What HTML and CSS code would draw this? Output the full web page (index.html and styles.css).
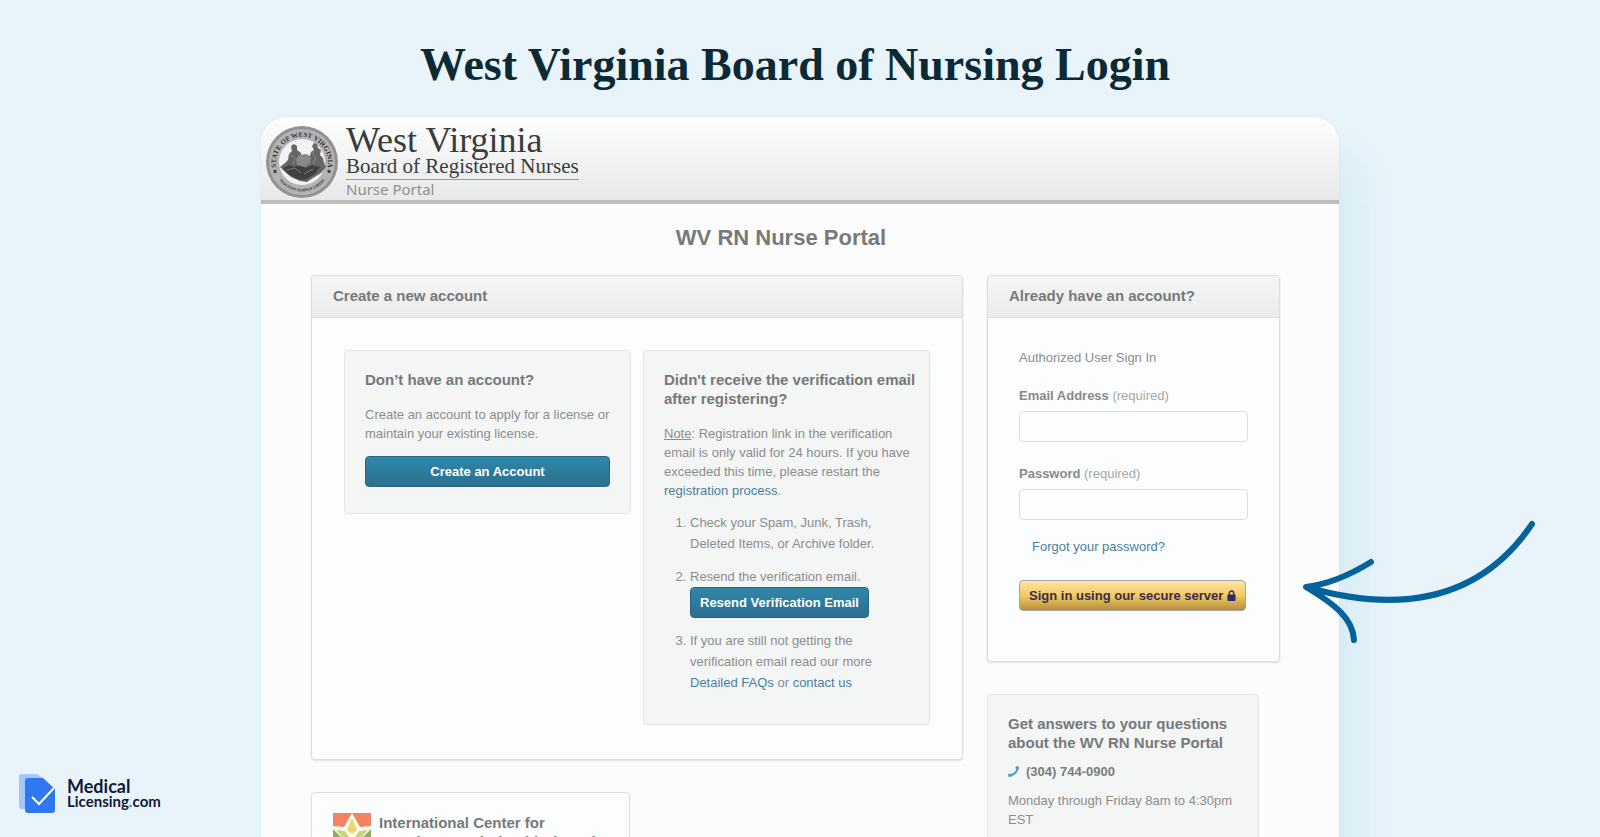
FILE: index.html
```html
<!DOCTYPE html>
<html lang="en">
<head>
    <meta charset="UTF-8">
    <meta name="viewport" content="width=device-width, initial-scale=1.0">
    <title>West Virginia Board of Nursing Login</title>
    <link rel="stylesheet" href="styles.css">
</head>
<body>
    <div class="page">
        <h1 class="page-title">West Virginia Board of Nursing Login</h1>

        <div class="window">
            <header class="site-header">
                <svg class="seal" viewBox="0 0 72 72" role="img" aria-label="State seal">
                    <defs>
                        <path id="sealTop" d="M10.5 42 A26 26 0 1 1 61.5 42"/>
                        <path id="sealBottom" d="M9 47 A29 29 0 0 0 63 47"/>
                    </defs>
                    <circle cx="36" cy="36" r="36" fill="#929292"/>
                    <circle cx="36" cy="36" r="33" fill="#b4b4b4"/>
                    <circle cx="36" cy="36" r="23" fill="#f2f2f2"/>
                    <path d="M14 41l5-4 3-3 1-6 3-3-1-5 3-2 3 2 0 4 4 3 0 3 5-1 4 1 1-4 3-2-2-4 2-3 3 1 1 4 3 2-1 5 3 3 1 5 2 4-5 6-8 5-6 4-7-1-9-4-7-6z" fill="#666"/>
                    <path d="M17 42l6-3 5 2 5-2 7 3 6-3 8 2-5 7-10 6-8-1-9-5z" fill="#404040"/>
                    <path d="M30 33l3-4 7-1 5 3-1 7-6 3-7-2z" fill="#888"/>
                    <path d="M24 28l5 4-2 6M46 26l4 6-3 6M21 44l8-2 6 5M38 48l9-5M33 32l8 1" stroke="#999" stroke-width=".7" fill="none"/>
                    <text class="seal-top"><textPath href="#sealTop" startOffset="50%">STATE OF WEST VIRGINIA</textPath></text>
                    <text class="seal-bottom"><textPath href="#sealBottom" startOffset="50%">MONTANI SEMPER LIBERI</textPath></text>
                    <path d="M9 43l.7 1.500 1.600.2-1.200 1.100.3 1.600-1.400-.8-1.400.8.3-1.600-1.200-1.100 1.600-.2zM63 43l.7 1.500 1.600.2-1.200 1.100.3 1.600-1.400-.8-1.400.8.3-1.600-1.200-1.100 1.600-.2z" fill="#333"/>
                </svg>
                <div class="site-name">
                    <div class="state">West Virginia</div>
                    <div class="board">Board of Registered Nurses</div>
                    <div class="portal">Nurse Portal</div>
                </div>
            </header>

            <main class="content">
                <h2 class="portal-title">WV RN Nurse Portal</h2>

                <div class="columns">
                    <div class="column">
                        <section class="panel create-panel">
                            <h3 class="panel-header">Create a new account</h3>
                            <div class="panel-cards">
                                <div class="card">
                                    <h4>Don’t have an account?</h4>
                                    <p>Create an account to apply for a license or maintain your existing license.</p>
                                    <button type="button" class="btn btn-block">Create an Account</button>
                                </div>
                                <div class="card verify-card">
                                    <h4>Didn't receive the verification email after registering?</h4>
                                    <p><u>Note</u>: Registration link in the verification email is only valid for 24 hours. If you have exceeded this time, please restart the <a href="#">registration process</a>.</p>
                                    <ol>
                                        <li>Check your Spam, Junk, Trash, Deleted Items, or Archive folder.</li>
                                        <li>Resend the verification email.
                                            <button type="button" class="btn">Resend Verification Email</button>
                                        </li>
                                        <li>If you are still not getting the verification email read our more <a href="#">Detailed FAQs</a> or <a href="#">contact us</a></li>
                                    </ol>
                                </div>
                            </div>
                        </section>

                        <section class="scholar-card">
                            <svg class="scholar-logo" viewBox="0 0 38 38" aria-hidden="true">
                                <rect width="38" height="38" fill="#f4845f"/>
                                <path d="M0 16l12 3-4 19H0zM38 16l-12 3 4 19h8z" fill="#8fae5d"/>
                                <path d="M19 0l8 14 11-1v3l-9 9 3 13H6l3-13-9-9v-3l11 1z" fill="#fffdf2"/>
                                <path d="M19 5l5 12-5 4-5-4z" fill="#f0d46c"/>
                                <path d="M3 17l9 1 4 6-5 2zM35 17l-9 1-4 6 5 2z" fill="#c9d578"/>
                            </svg>
                            <h4>International Center for Regulatory Scholarship (ICRS)</h4>
                        </section>
                    </div>

                    <div class="column">
                        <section class="panel">
                            <h3 class="panel-header">Already have an account?</h3>
                            <form class="login-form">
                                <p>Authorized User Sign In</p>
                                <label for="email">Email Address <span>(required)</span></label>
                                <input type="email" id="email">
                                <label for="password">Password <span>(required)</span></label>
                                <input type="password" id="password">
                                <a class="forgot" href="#">Forgot your password?</a>
                                <button type="button" class="btn-login">Sign in using our secure server
                                    <svg viewBox="0 0 10 12" aria-hidden="true">
                                        <path d="M2.500 6V3.500a2.500 2.500 0 0 1 5 0V6" fill="none" stroke="#2b2a6b" stroke-width="1.500"/>
                                        <rect x="0.500" y="5" width="9" height="7" rx="1" fill="#2b2a6b"/>
                                    </svg>
                                </button>
                            </form>
                        </section>

                        <section class="card help-card">
                            <h4>Get answers to your questions about the WV RN Nurse Portal</h4>
                            <div class="phone">
                                <svg viewBox="0 0 11 11" aria-hidden="true">
                                    <path d="M9.500 1C10 5 6 9.500 1 9.500" fill="none" stroke="#5f9bb8" stroke-width="2"/>
                                    <path d="M7.500 .5l3-.5.5 3.500-3 .5zM0 8l3.500-.5.8 2.800L.5 11z" fill="#5f9bb8"/>
                                </svg>
                                (304) 744-0900
                            </div>
                            <p>Monday through Friday 8am to 4:30pm EST</p>
                        </section>
                    </div>
                </div>
            </main>
        </div>

        <svg class="arrow" viewBox="0 0 240 135" aria-hidden="true">
            <path d="M232 9C180 86 100 99 6 72M71 47C50 60 30 69 6 72C36 90 53 104 54 125"/>
        </svg>

        <a class="brand" href="#">
            <svg viewBox="0 0 36 39" aria-hidden="true">
                <path d="M3 0h14q2 0 4 2l6 5v28H3q-3 0-3-3V3q0-3 3-3z" fill="#a4c8fa"/>
                <path d="M9 4h15l12 11v21q0 3-3 3H9q-3 0-3-3V7q0-3 3-3z" fill="#2f78f2"/>
                <path d="M13 23l7 7 15-16" fill="none" stroke="#fff" stroke-width="2"/>
            </svg>
            <span class="brand-name">
                <span class="brand-medical">Medical</span>
                <span class="brand-licensing">Licensing<i>.</i>com</span>
            </span>
        </a>
    </div>
</body>
</html>
```
FILE: styles.css
```css
* {
    box-sizing: border-box;
}
body {
    font-family: "Liberation Sans", Arial, sans-serif;
    font-size: 13px;
    line-height: 19px;
    margin: 0;
    color: #8b8d8e;
    background-color: #e8f4fa;
}
h1, h2, h3, h4, p {
    margin: 0;
}
a {
    color: #4a7f9f;
    text-decoration: none;
}
.page {
    position: relative;
    height: 100vh;
    overflow: hidden;
    padding: 37px 261px 0;
}
.page-title {
    padding-right: 10px;
    margin-bottom: 24px;
    font-family: "Liberation Serif", serif;
    font-size: 46px;
    line-height: 56px;
    text-align: center;
    color: #0c2a35;
}
.window {
    border-radius: 26px 26px 0 0;
    background-color: #fcfcfc;
    box-shadow: 0 0 2px #cddfe2, 28px 30px 40px -6px rgba(150, 205, 225, 0.2);
}

/* portal header */
.site-header {
    display: flex;
    align-items: flex-start;
    gap: 8px;
    height: 87px;
    padding: 8px 5px 0;
    border-bottom: 4px solid #bdbdbd;
    border-radius: 26px 26px 0 0;
    background: linear-gradient(#fdfefe, #e7e8e8);
}
.seal {
    width: 72px;
    height: 74px;
}
.seal text {
    font-family: "Liberation Serif", serif;
    font-weight: bold;
    text-anchor: middle;
    fill: #333;
}
.seal .seal-top {
    font-size: 7px;
}
.seal .seal-bottom {
    font-size: 4px;
}
.site-name {
    font-family: "Liberation Serif", serif;
    color: #3a3b3c;
}
.state {
    font-size: 36px;
    line-height: 30px;
}
.board {
    padding-bottom: 2px;
    border-bottom: 1px solid #999;
    font-size: 21px;
    line-height: 22px;
}
.portal {
    font-family: "Noto Sans", sans-serif;
    font-size: 15px;
    line-height: 18px;
    color: #8e9090;
}

/* main area */
.content {
    padding: 20px 59px 0 50px;
}
.portal-title {
    padding-right: 29px;
    margin-bottom: 23px;
    font-size: 22px;
    line-height: 28px;
    text-align: center;
    color: #77797a;
}
.columns {
    display: grid;
    grid-template-columns: 1fr 293px;
    gap: 24px;
}
.column {
    display: flex;
    flex-direction: column;
    gap: 32px;
}
.panel {
    border: 1px solid #dcdee0;
    border-radius: 4px;
    background-color: #fcfdfe;
    box-shadow: 0 1px 2px rgba(0, 0, 0, 0.12);
}
.panel-header {
    padding: 10px 21px 12px;
    border-bottom: 1px solid #d9dbdc;
    border-radius: 4px 4px 0 0;
    background: linear-gradient(#f4f5f5, #eaebeb);
    font-size: 15px;
    line-height: 19px;
    color: #76797a;
}
.panel-cards {
    display: grid;
    grid-template-columns: minmax(0, 1fr) minmax(0, 1fr);
    align-items: start;
    gap: 12px;
    padding: 32px 32px 34px;
}
.card {
    padding: 19px 20px 20px;
    border: 1px solid #e1e3e4;
    border-radius: 4px;
    background-color: #f4f5f5;
}
.card h4, .scholar-card h4 {
    font-size: 15px;
    line-height: 19px;
    color: #76797a;
}
.panel-cards h4 {
    margin: 0 -12px 16px 0;
}
.panel-cards p {
    margin-right: -12px;
}
.panel-cards .card {
    padding-bottom: 26px;
}
.panel-cards .verify-card {
    padding-bottom: 19px;
}
.btn {
    display: block;
    height: 31px;
    padding: 0 9px;
    border: 1px solid #2b6480;
    border-radius: 4px;
    background: linear-gradient(#2f87a8, #2c7090);
    font-family: inherit;
    font-size: 13px;
    font-weight: bold;
    color: #fff;
}
.btn-block {
    width: 100%;
    margin-top: 13px;
}
ol {
    margin: 12px 0 0;
    padding-left: 26px;
    line-height: 21px;
}
li {
    padding-right: 30px;
    margin-bottom: 12px;
}
li .btn {
    white-space: nowrap;
}
.scholar-card {
    display: flex;
    gap: 8px;
    width: 319px;
    padding: 20px 21px;
    border: 1px solid #dcdee0;
    border-radius: 4px;
    background-color: #fcfdfe;
}
.scholar-logo {
    width: 38px;
    height: 38px;
    flex: none;
}

/* sign in */
.login-form {
    display: flex;
    flex-direction: column;
    padding: 30px 31px 50px;
}
.login-form label {
    margin: 19px 0 6px;
    font-weight: bold;
    color: #88898a;
}
.login-form label span {
    font-weight: normal;
    color: #a5a7a8;
}
.login-form input {
    height: 31px;
    padding: 0 8px;
    border: 1px solid #dcdddf;
    border-radius: 4px;
    background-color: #fefefe;
}
.login-form input + label {
    margin-top: 22px;
}
.forgot {
    margin: 17px 0 24px 13px;
}
.btn-login {
    align-self: flex-start;
    height: 31px;
    padding: 0 9px;
    border: 1px solid #a3a3a3;
    border-radius: 4px;
    background: linear-gradient(#fce5a6, #f2ca62 50%, #b58f3c);
    font-family: inherit;
    font-size: 13px;
    font-weight: bold;
    white-space: nowrap;
    color: #3a2a50;
}
.btn-login svg {
    width: 9px;
    height: 11px;
    vertical-align: -1px;
}
.help-card {
    width: 272px;
}
.phone {
    display: flex;
    align-items: center;
    gap: 7px;
    margin: 10px 0;
    font-weight: bold;
    color: #7a7c7d;
}
.phone svg {
    width: 11px;
    height: 11px;
}

/* overlays */
.arrow {
    position: absolute;
    top: 515px;
    right: 60px;
    width: 240px;
    height: 135px;
    fill: none;
    stroke: #04639a;
    stroke-width: 6px;
    stroke-linecap: round;
    stroke-linejoin: round;
}
.brand {
    position: absolute;
    left: 19px;
    bottom: 24px;
    display: flex;
    gap: 12px;
    font-family: Lato, sans-serif;
    color: #10193a;
}
.brand svg {
    width: 36px;
    height: 39px;
}
.brand-name {
    display: flex;
    flex-direction: column;
    padding-top: 4px;
}
.brand-medical {
    font-size: 18px;
    font-weight: bold;
    line-height: 16px;
}
.brand-licensing {
    font-size: 15px;
    font-weight: bold;
    line-height: 14px;
}
.brand i {
    color: #2f78f2;
}
```
